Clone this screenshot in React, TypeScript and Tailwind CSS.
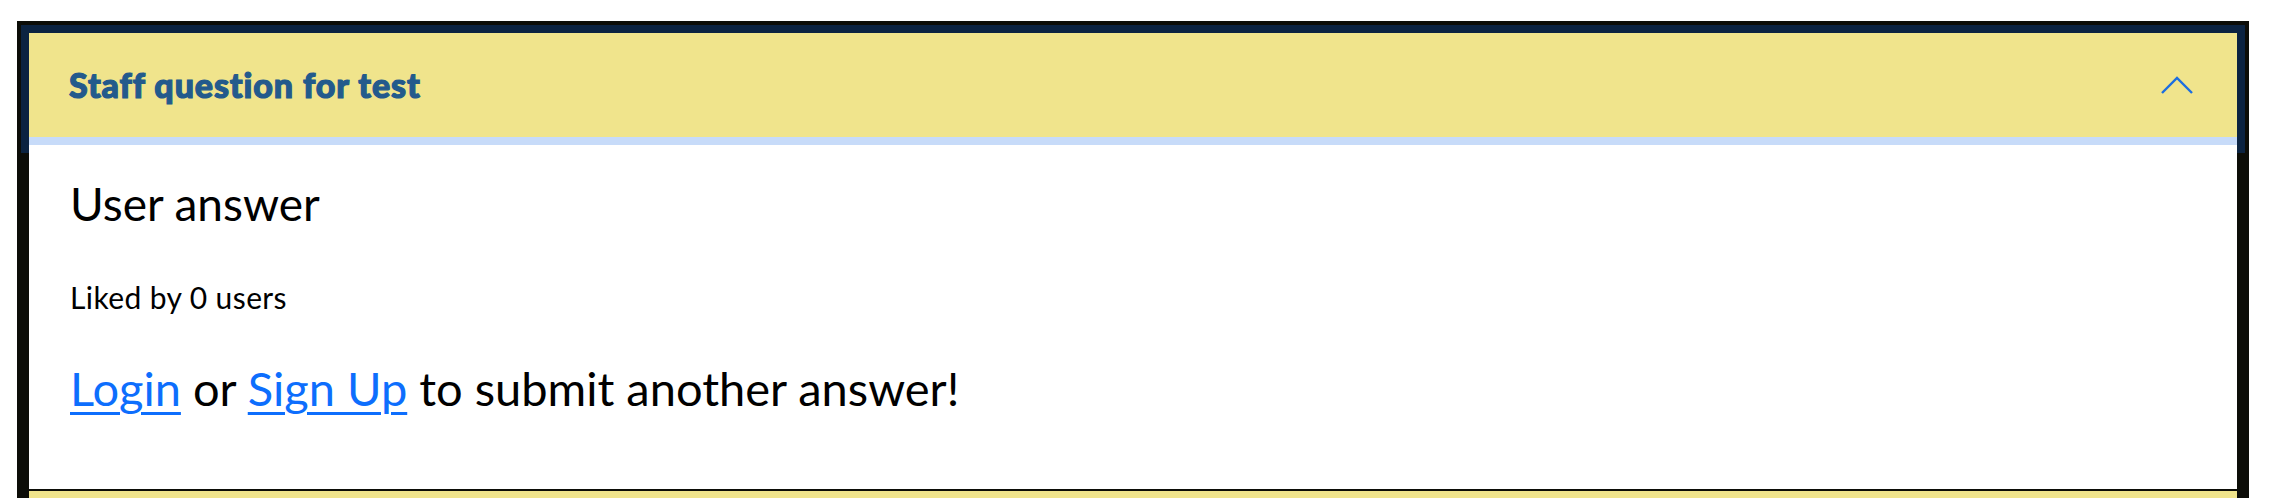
import { ChevronUp } from 'lucide-react';

const body = "font-['Lato','Liberation_Sans',sans-serif]";

function AccordionHeader({ title, open, focused }: { title?: string; open: boolean; focused?: boolean }) {
  return (
    <div
      className={
        'flex items-center justify-between h-[112px] bg-[#f0e48c] pl-[40px] pr-[44px] ' +
        (focused ? 'border-b-[8px] border-[#c7dbf9] shadow-[0_0_0_8px_#0b2341]' : '')
      }
    >
      <h3 className="font-['Lato',sans-serif] font-black text-[34px] leading-none tracking-[0.9px] text-[#235a8c] [-webkit-text-stroke:1.2px_#235a8c]">
        {title}
      </h3>
      {open ? (
        <svg width="32" height="18" viewBox="0 0 32 18" fill="none" className="shrink-0">
          <polyline points="1,17 16,2 31,17" stroke="#1c6ee0" strokeWidth="2.4" />
        </svg>
      ) : (
        <ChevronUp size={32} className="rotate-180 text-[#1c6ee0]" />
      )}
    </div>
  );
}

export default function App() {
  return (
    <div className="h-[498px] overflow-hidden bg-white pt-[21px] pl-[17px] pr-[21px]">
      <div className="border-x-[12px] border-t-[12px] border-[#0c0d08]">
        <AccordionHeader title="Staff question for test" open focused />

        {/* Answer body */}
        <div className={`bg-white pl-[41px] pt-[36px] pb-[77px] border-b-2 border-[#0c0d08] text-black ${body}`}>
          <h5 className="text-[46px] leading-none">User answer</h5>
          <p className="mt-[55px] text-[30px] leading-none tracking-[0.4px]">Liked by 0 users</p>
          <p className="mt-[53px] text-[47px] leading-none">
            <a href="#" className="text-[#0d6efd] underline underline-offset-[6px] decoration-[3px]">Login</a>
            {' or '}
            <a href="#" className="text-[#0d6efd] underline underline-offset-[6px] decoration-[3px]">Sign Up</a>
            {' to submit another answer!'}
          </p>
        </div>

        {/* Next question, only its top edge is in view */}
        <AccordionHeader open={false} />
      </div>
    </div>
  );
}
